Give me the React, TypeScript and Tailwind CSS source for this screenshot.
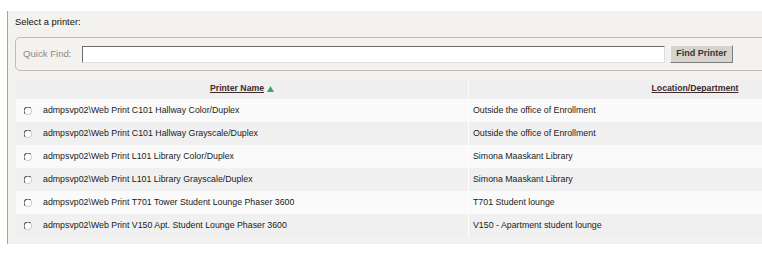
import React from "react";

const rows = [
  ["admpsvp02\\Web Print C101 Hallway Color/Duplex", "Outside the office of Enrollment"],
  ["admpsvp02\\Web Print C101 Hallway Grayscale/Duplex", "Outside the office of Enrollment"],
  ["admpsvp02\\Web Print L101 Library Color/Duplex", "Simona Maaskant Library"],
  ["admpsvp02\\Web Print L101 Library Grayscale/Duplex", "Simona Maaskant Library"],
  ["admpsvp02\\Web Print T701 Tower Student Lounge Phaser 3600", "T701 Student lounge"],
  ["admpsvp02\\Web Print V150 Apt. Student Lounge Phaser 3600", "V150 - Apartment student lounge"],
];

function Radio() {
  return (
    <svg width="8" height="8" viewBox="0 0 8 8" className="shrink-0">
      <circle cx="4" cy="4" r="3.5" fill="#ffffff" />
      <path d="M1.2 6.6 A3.5 3.5 0 0 1 6.6 1.2" fill="none" stroke="#4a4a4a" strokeWidth="1.1" />
      <path d="M6.6 1.2 A3.5 3.5 0 0 1 1.2 6.6" fill="none" stroke="#c4c4c4" strokeWidth="1" />
    </svg>
  );
}

export default function App() {
  return (
    <div
      className="w-[762px] h-[255px] bg-white overflow-hidden"
      style={{ fontFamily: '"Liberation Sans", Arial, sans-serif' }}
    >
      <div className="ml-[7px] mt-[11px] w-[930px] h-[233px] border-l border-[#a3a3a3] bg-[#f3f2ee] pl-[7px] flex flex-col">
        <div className="h-[22px] flex items-center text-[9.4px] text-[#111]">Select a printer:</div>
        <div className="mt-[4px] mr-[8px] h-[34px] border border-[#bdbdbd] rounded-[5px] flex items-center pl-[7px]">
          <span className="text-[9.6px] text-[#8a8a8a] w-[59px]">Quick Find:</span>
          <div className="w-[583px] h-[17px] bg-white border border-t-[#6e6e6e] border-l-[#6e6e6e] border-r-[#dedede] border-b-[#dedede]" />
          <div className="ml-[5px] w-[63px] h-[18px] bg-[#d6d3cd] border border-t-[#f4f4f4] border-l-[#f4f4f4] border-r-[#7d7d7d] border-b-[#7d7d7d] flex items-center justify-center text-[9px] font-bold text-[#333]">
            Find Printer
          </div>
        </div>
        <div className="mt-[8px] ml-[1px] w-[905px] flex flex-col">
          <div className="h-[20px] flex bg-[#efefef]">
            <div className="w-[452px] flex items-center justify-center gap-[3px]">
              <span className="text-[8.7px] font-bold underline text-[#3e2a2a]">Printer Name</span>
              <svg width="7" height="6" viewBox="0 0 7 6">
                <path d="M3.5 0 L7 6 L0 6 Z" fill="#37a865" />
              </svg>
            </div>
            <div className="w-[453px] border-l border-[#fbfbfb] flex items-center justify-center">
              <span className="text-[8.7px] font-bold underline text-[#3e2a2a]">Location/Department</span>
            </div>
          </div>
          {rows.map(([name, loc], i) => (
            <div
              key={i}
              className={`h-[23px] flex ${i % 2 === 0 ? "bg-[#fafafa]" : "bg-[#f0f0f0]"}`}
            >
              <div className="w-[452px] flex items-center pl-[8px] gap-[11px]">
                <Radio />
                <span className="text-[8.8px] text-[#1a1a1a] whitespace-nowrap">{name}</span>
              </div>
              <div className="w-[453px] border-l border-[#ffffff] flex items-center pl-[4px]">
                <span className="text-[8.8px] text-[#1a1a1a] whitespace-nowrap">{loc}</span>
              </div>
            </div>
          ))}
        </div>
      </div>
    </div>
  );
}
